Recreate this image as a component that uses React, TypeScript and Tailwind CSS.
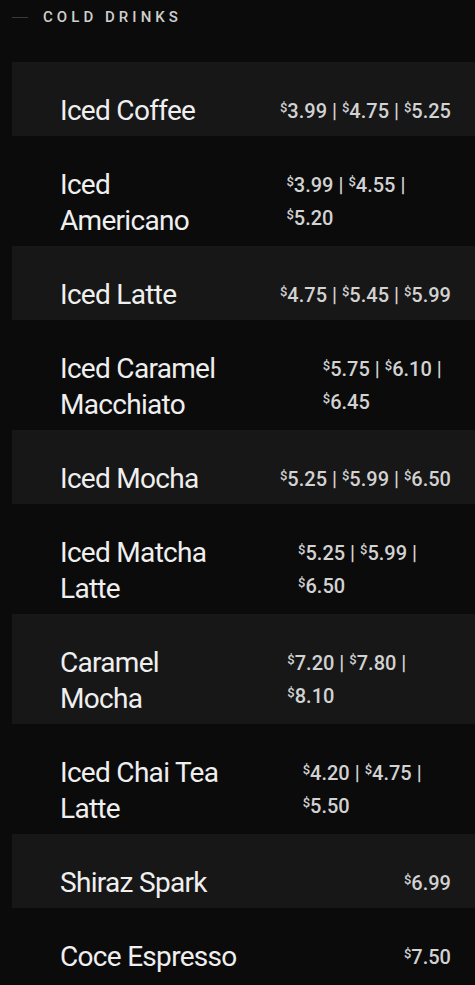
type Drink = {
  name: string;
  prices: string[];
};

const drinks: Drink[] = [
  { name: 'Iced Coffee', prices: ['3.99', '4.75', '5.25'] },
  { name: 'Iced Americano', prices: ['3.99', '4.55', '5.20'] },
  { name: 'Iced Latte', prices: ['4.75', '5.45', '5.99'] },
  { name: 'Iced Caramel Macchiato', prices: ['5.75', '6.10', '6.45'] },
  { name: 'Iced Mocha', prices: ['5.25', '5.99', '6.50'] },
  { name: 'Iced Matcha Latte', prices: ['5.25', '5.99', '6.50'] },
  { name: 'Caramel Mocha', prices: ['7.20', '7.80', '8.10'] },
  { name: 'Iced Chai Tea Latte', prices: ['4.20', '4.75', '5.50'] },
  { name: 'Shiraz Spark', prices: ['6.99'] },
  { name: 'Coce Espresso', prices: ['7.50'] },
];

function Price({ value }: { value: string }) {
  return (
    <>
      <sup className="text-[13px]">$</sup>
      {value}
    </>
  );
}

export default function App() {
  return (
    <div className="min-h-[985px] bg-[#0b0b0b] font-['Roboto',sans-serif] overflow-hidden">
      {/* Section heading */}
      <div className="flex items-center gap-[15px] pl-3 pt-[7px]">
        <span className="w-4 h-px bg-[#3a3a3a]" />
        <h2 className="text-[15px] leading-5 font-medium tracking-[0.27em] text-[#cfcfcf]">
          COLD DRINKS
        </h2>
      </div>

      {/* Menu rows */}
      <ul className="mt-[35px] ml-3">
        {drinks.map((drink, i) => (
          <li
            key={drink.name}
            className={`flex items-start justify-between gap-12 pl-12 pr-6 pt-[31px] pb-[7px] ${
              i % 2 === 0 ? 'bg-[#171717]' : ''
            }`}
          >
            <span className="text-[28px] leading-[36px] tracking-tight text-[#efefef]">
              {drink.name}
            </span>
            <span className="mt-[2px] text-[20px] leading-[33px] font-medium text-[#d2d2d2]">
              {drink.prices.map((p, j) => (
                <span key={j}>
                  {j > 0 && ' | '}
                  <Price value={p} />
                </span>
              ))}
            </span>
          </li>
        ))}
      </ul>
    </div>
  );
}
